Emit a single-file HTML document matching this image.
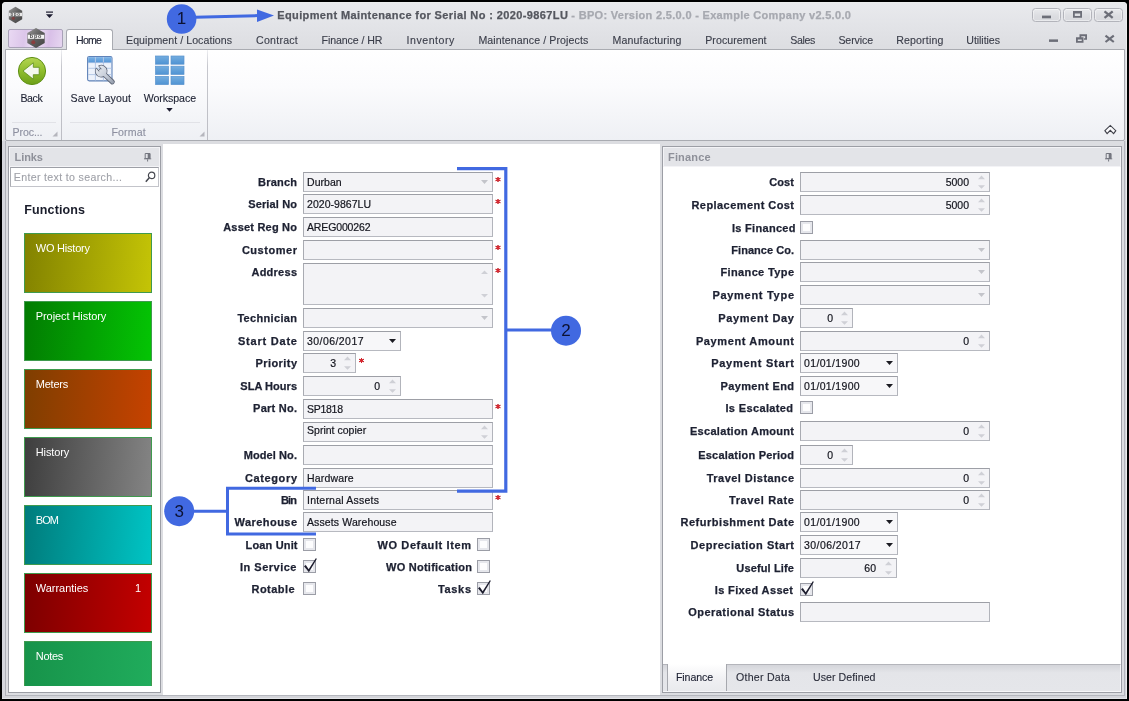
<!DOCTYPE html>
<html><head><meta charset="utf-8"><title>Equipment Maintenance</title>
<style>
*{box-sizing:border-box;margin:0;padding:0}
html,body{width:1129px;height:701px;overflow:hidden;background:#000}
body{font-family:"Liberation Sans",sans-serif;font-size:10.5px;color:#1e2233;position:relative}
div,span,svg{position:absolute}
.t{white-space:nowrap;line-height:12px}
.lbl{font-weight:bold;font-size:11px;-webkit-text-stroke:.25px #1d2132;text-align:right;white-space:nowrap;line-height:12px;color:#1d2132}
.inp{background:#f3f3f6;border:1px solid #abadb3;border-color:#9d9fa6 #b2b4bb #b7b9c0 #a9abb2}
.v{left:3px;top:3px;white-space:nowrap;line-height:12px;color:#14151e;-webkit-text-stroke:.2px #14151e}
.r{top:3px;white-space:nowrap;line-height:12px;color:#14151e;text-align:right;-webkit-text-stroke:.2px #14151e}
.cb{width:13px;height:13px;border:1px solid #9b9da6;background:#fdfdfe;box-shadow:inset 0 0 0 2px #e6e7ec}
.ast{color:#e2202a;font-family:'DejaVu Sans',sans-serif;font-weight:bold;font-size:10.5px;line-height:10px;text-shadow:0 0 .6px #7a1010}
.tab{white-space:nowrap;line-height:12px;color:#3b3e4a;font-size:10.6px;letter-spacing:.12px;-webkit-text-stroke:.12px currentColor}
.tile{width:128px;height:60px;border:1px solid #3f9a4e;color:#fff}
.tile span{left:10px;top:8px;font-size:11.3px;line-height:13px;white-space:nowrap}
.num{color:#0c1233;font-size:17px;line-height:18px;text-align:center;width:30px}
</style></head><body>
<div id="root" style="left:0;top:0;width:1129px;height:701px;will-change:transform">
<div style="left:2px;top:2px;width:1125px;height:697px;background:#dcdde1;border-radius:4px 4px 0 0"></div>
<div style="left:2px;top:2px;width:1125px;height:697px;border:1px solid #eceded;border-radius:4px 4px 0 0;border-bottom-color:#e3e4e8"></div>
<div style="left:1124px;top:141px;width:1px;height:555px;background:#b4b6bd"></div>
<div style="left:5px;top:695px;width:1120px;height:1px;background:#b4b6bd"></div>
<div style="left:5px;top:141px;width:1px;height:555px;background:#b0b2b9"></div>
<div style="left:2px;top:141px;width:3px;height:557px;background:#d6d7dd"></div>
<div style="left:3px;top:696px;width:1123px;height:2px;background:#d3d4d9"></div>
<div style="left:1125px;top:141px;width:1px;height:556px;background:#d3d4d9"></div>
<div style="left:3px;top:3px;width:1123px;height:47px;background:linear-gradient(#e9eaed,#e3e4e8 45%,#dcdde1);border-radius:4px 4px 0 0"></div>
<svg style="left:8px;top:6px" width="15" height="18" viewBox="0 0 15 18"><defs><linearGradient id="hg" x1="0" y1="0" x2="1" y2="1"><stop offset="0" stop-color="#9a9a9a"/><stop offset=".5" stop-color="#5e5e5e"/><stop offset="1" stop-color="#444"/></linearGradient></defs><path d="M7.500 0.800L14.200 4.700V13.300L7.500 17.200L0.800 13.300V4.700z" fill="url(#hg)"/><rect x="1" y="6.800" width="13" height="3.400" fill="#e9e9e9"/><text x="7.500" y="9.800" font-size="4.500" font-weight="bold" text-anchor="middle" fill="#555" font-family="Liberation Sans,sans-serif" letter-spacing="0.600">bpo</text><circle cx="5.300" cy="12.300" r="1.600" fill="#8c3030" opacity=".65"/></svg>
<svg style="left:45px;top:11px" width="9" height="8" viewBox="0 0 9 8"><rect x="1" y="0.5" width="7" height="1.2" fill="#1c1c30"/><path d="M1 3.2h7L4.5 7z" fill="#1c1c30"/></svg>
<span class="t" style="left:277.20px;top:9px;font-weight:bold;font-size:11px;letter-spacing:0.39px;color:#55575f;-webkit-text-stroke:.25px #55575f">Equipment Maintenance for Serial No : 2020-9867LU</span>
<span class="t" style="left:571.30px;top:9px;font-weight:bold;font-size:11px;letter-spacing:0.31px;color:#a7a9b0;-webkit-text-stroke:.25px #a7a9b0">- BPO: Version 2.5.0.0 - Example Company v2.5.0.0</span>
<div style="left:1032px;top:7.5px;width:29px;height:14.5px;border:1px solid #b3b4bb;border-radius:3.5px;background:linear-gradient(#e9eaed,#dcdde1 55%,#d8d9de);box-shadow:inset 0 0 0 1px rgba(255,255,255,.45)"></div>
<div style="left:1063px;top:7.5px;width:29px;height:14.5px;border:1px solid #b3b4bb;border-radius:3.5px;background:linear-gradient(#e9eaed,#dcdde1 55%,#d8d9de);box-shadow:inset 0 0 0 1px rgba(255,255,255,.45)"></div>
<div style="left:1094px;top:7.5px;width:29px;height:14.5px;border:1px solid #b3b4bb;border-radius:3.5px;background:linear-gradient(#e9eaed,#dcdde1 55%,#d8d9de);box-shadow:inset 0 0 0 1px rgba(255,255,255,.45)"></div>
<svg style="left:1032px;top:7px" width="92" height="16" viewBox="0 0 92 16"><rect x="10" y="8.600" width="9" height="2.700" fill="#6c6e78"/><path d="M41 4h9v6.800h-9z M42.800 6.400v2.600h5.400v-2.600z" fill="#6c6e78" fill-rule="evenodd"/><path d="M72.500 4.300l8.200 6.500M80.700 4.300l-8.200 6.500" stroke="#6c6e78" stroke-width="2.300" fill="none"/></svg>
<div style="left:8px;top:29px;width:55px;height:19px;border:1px solid #a9a2b8;border-radius:2px;background:linear-gradient(100deg,#e9d9f3,#dcc6ea 30%,#efe6f6 50%,#d9c0e8 75%,#e6d6f0)"></div>
<svg style="left:26px;top:27px" width="20" height="22" viewBox="0 0 20 22"><path d="M10 1L18.700 6V16L10 21L1.300 16V6z" fill="url(#hg)"/><rect x="1.800" y="7.800" width="16.400" height="4" fill="#f4f4f4"/><text x="10" y="11.400" font-size="5.500" font-weight="bold" text-anchor="middle" fill="#444" font-family="Liberation Sans,sans-serif" letter-spacing="0.800">bpo</text><circle cx="7.300" cy="15.300" r="2" fill="#9c3030" opacity=".7"/></svg>
<div style="left:5px;top:49px;width:1120px;height:92px;background:linear-gradient(#ffffff,#fbfbfd 40%,#eef0f4);border:1px solid #a9abb1;border-radius:0 0 2px 2px"></div>
<div style="left:66px;top:29px;width:47px;height:21px;background:#fff;border:1px solid #a9abb1;border-bottom:none;border-radius:3px 3px 0 0"></div>
<span class="tab" style="left:76.00px;top:34px;letter-spacing:-0.75px;color:#1e2233">Home</span>
<span class="tab" style="left:126.00px;top:34px;letter-spacing:0.06px;">Equipment / Locations</span>
<span class="tab" style="left:256.00px;top:34px;letter-spacing:0.25px;">Contract</span>
<span class="tab" style="left:321.50px;top:34px;letter-spacing:-0.08px;">Finance / HR</span>
<span class="tab" style="left:406.50px;top:34px;letter-spacing:0.53px;">Inventory</span>
<span class="tab" style="left:478.40px;top:34px;letter-spacing:0.10px;">Maintenance / Projects</span>
<span class="tab" style="left:612.40px;top:34px;letter-spacing:0.16px;">Manufacturing</span>
<span class="tab" style="left:705.20px;top:34px;letter-spacing:0.07px;">Procurement</span>
<span class="tab" style="left:790.30px;top:34px;letter-spacing:-0.35px;">Sales</span>
<span class="tab" style="left:838.40px;top:34px;letter-spacing:-0.09px;">Service</span>
<span class="tab" style="left:896.20px;top:34px;letter-spacing:0.15px;">Reporting</span>
<span class="tab" style="left:966.30px;top:34px;letter-spacing:-0.06px;">Utilities</span>
<svg style="left:1045px;top:32px" width="75" height="14" viewBox="0 0 75 14"><rect x="4" y="7.400" width="9" height="2.500" fill="#6c6e78"/><path d="M34.500 2.300h7.500v5.500h-3v-1.600h1.200v-1.900h-3.900v1h-1.800z M31 5.300h7.500v5.500H31z M32.800 7.600v1.500h3.900v-1.500z" fill="#6c6e78" fill-rule="evenodd"/><path d="M60.500 3.600l8.300 6.400M68.800 3.600l-8.300 6.400" stroke="#6c6e78" stroke-width="2.200" fill="none"/></svg>
<div style="left:61px;top:50px;width:1px;height:90px;background:linear-gradient(#eeeff2,#c6c7cd 18%,#bcbdc4)"></div>
<div style="left:207px;top:50px;width:1px;height:90px;background:linear-gradient(#eeeff2,#c6c7cd 18%,#bcbdc4)"></div>
<div style="left:12px;top:122px;width:44px;height:1px;background:#e1e2e7"></div>
<div style="left:70px;top:122px;width:130px;height:1px;background:#e1e2e7"></div>
<svg style="left:17px;top:56px" width="30" height="30" viewBox="0 0 30 30"><defs><linearGradient id="gg" x1="0" y1="0" x2="0" y2="1"><stop offset="0" stop-color="#b4d552"/><stop offset=".5" stop-color="#8fbd2c"/><stop offset="1" stop-color="#6c9f18"/></linearGradient></defs><circle cx="15" cy="15" r="13.600" fill="url(#gg)" stroke="#5f9016" stroke-width="1"/><path d="M6 15L16.300 6.800V11.300h5.900v7.400H16.300v4.500z" fill="#f4f8ee" stroke="#5b8a17" stroke-width=".8"/></svg>
<svg style="left:86px;top:55px" width="31" height="31" viewBox="0 0 31 31"><defs><linearGradient id="tg" x1="0" y1="0" x2="0" y2="1"><stop offset="0" stop-color="#7db3e6"/><stop offset="1" stop-color="#5596d6"/></linearGradient><linearGradient id="wg" gradientUnits="userSpaceOnUse" x1="9" y1="10" x2="28" y2="29"><stop offset="0" stop-color="#eef1f6"/><stop offset=".6" stop-color="#c3cad6"/><stop offset="1" stop-color="#8f98a8"/></linearGradient></defs><rect x="1.600" y="1.500" width="24.400" height="24.400" rx="1.600" fill="#edf2fb" stroke="#5f82b8" stroke-width="1.100"/><path d="M2.200 2.100h23.200v5.400H2.200z" fill="url(#tg)"/><path d="M9.400 2v23.400M17.400 2v23.400M2.200 13.300h23.200M2.200 19.600h23.200" stroke="#b4c8e6" stroke-width="1"/><path d="M2.200 7.600h23.200" stroke="#8fb2de" stroke-width=".8"/><path d="M18 19L26.300 26.900" stroke="#5d6475" stroke-width="5" stroke-linecap="round"/><path d="M13.09 11.01L16.34 14.63A1.9 1.9 0 0 0 13.52 17.17L10.26 13.56A5.6 5.6 0 1 0 13.09 11.01z" fill="#5d6475" stroke="#5d6475" stroke-width="1.400" stroke-linejoin="round"/><path d="M18 19L26.300 26.900" stroke="url(#wg)" stroke-width="3.300" stroke-linecap="round"/><path d="M13.09 11.01L16.34 14.63A1.9 1.9 0 0 0 13.52 17.17L10.26 13.56A5.6 5.6 0 1 0 13.09 11.01z" fill="url(#wg)"/></svg>
<svg style="left:155px;top:55px" width="30" height="31" viewBox="0 0 30 31"><defs><linearGradient id="bg2" x1="0" y1="0" x2="0" y2="1"><stop offset="0" stop-color="#74addf"/><stop offset="1" stop-color="#4f93d3"/></linearGradient></defs><rect x="0.5" y="1.0" width="13" height="8.200" fill="url(#bg2)" stroke="#5a93cd" stroke-width=".7"/><rect x="16.0" y="1.0" width="13" height="8.200" fill="url(#bg2)" stroke="#5a93cd" stroke-width=".7"/><rect x="0.5" y="11.2" width="13" height="8.200" fill="url(#bg2)" stroke="#5a93cd" stroke-width=".7"/><rect x="16.0" y="11.2" width="13" height="8.200" fill="url(#bg2)" stroke="#5a93cd" stroke-width=".7"/><rect x="0.5" y="21.4" width="13" height="8.200" fill="url(#bg2)" stroke="#5a93cd" stroke-width=".7"/><rect x="16.0" y="21.4" width="13" height="8.200" fill="url(#bg2)" stroke="#5a93cd" stroke-width=".7"/></svg>
<span class="tab" style="left:20.50px;top:92px;letter-spacing:-0.45px;color:#1e2233">Back</span>
<span class="tab" style="left:70.60px;top:92px;letter-spacing:0.15px;color:#1e2233">Save Layout</span>
<span class="tab" style="left:143.80px;top:92px;letter-spacing:-0.07px;color:#1e2233">Workspace</span>
<svg style="left:166px;top:108px" width="7" height="4" viewBox="0 0 7 4"><path d="M0.300 0h6.400L3.500 3.800z" fill="#1c1c30"/></svg>
<span class="tab" style="left:12.50px;top:126px;letter-spacing:-0.10px;color:#8d90a0">Proc...</span>
<span class="tab" style="left:111.50px;top:126px;letter-spacing:0.11px;color:#8d90a0">Format</span>
<svg style="left:52px;top:131px" width="6" height="6" viewBox="0 0 6 6"><path d="M5.500 0.500v5h-5z" fill="#b5b6bd"/></svg>
<svg style="left:199px;top:131px" width="6" height="6" viewBox="0 0 6 6"><path d="M5.500 0.500v5h-5z" fill="#b5b6bd"/></svg>
<svg style="left:1104px;top:124px" width="13" height="12" viewBox="0 0 13 12"><path d="M0.900 6.700L6.300 1.400L11.800 6.700L9.600 9.700L6.300 6.300L3.100 9.700z" fill="#fafafc" stroke="#3f414a" stroke-width="1.100" stroke-linejoin="miter"/></svg>
<div style="left:163px;top:144px;width:497px;height:551px;background:#fff"></div>
<div style="left:8px;top:146px;width:153px;height:547px;background:#fff;border:1px solid #9c9ea5"></div>
<div style="left:9px;top:147px;width:151px;height:20px;background:#e3e4e8;border:1px solid #f3f3f6"></div>
<span class="t" style="left:14.50px;top:151px;font-weight:bold;font-size:11px;letter-spacing:-0.06px;color:#8e9099">Links</span>
<svg style="left:144px;top:152.500px" width="8" height="9" viewBox="0 0 8 9"><path d="M1.200 0.500h4.800v5H1.200z" fill="none" stroke="#74767f" stroke-width="1"/><rect x="3.700" y="0.500" width="2.500" height="5" fill="#74767f"/><rect x="0" y="5.300" width="7.200" height="1" fill="#74767f"/><rect x="3.100" y="6.300" width="1" height="2.200" fill="#74767f"/></svg>
<div style="left:10px;top:167px;width:149px;height:20px;background:#fff;border:1px solid #abadb3;border-color:#9d9fa6 #c3c4ca #c3c4ca #abadb3"></div>
<span class="tab" style="left:13.75px;top:171px;letter-spacing:0.34px;color:#a0a2a9">Enter text to search...</span>
<svg style="left:144.700px;top:171px" width="11" height="12" viewBox="0 0 11 12"><circle cx="6.600" cy="4.400" r="3.200" fill="none" stroke="#45474f" stroke-width="1.200"/><path d="M4.300 6.800L0.800 10.800" stroke="#45474f" stroke-width="1.500"/></svg>
<span class="t" style="left:24.25px;top:203px;font-weight:bold;font-size:12.5px;letter-spacing:0.13px;color:#1a1d2b;line-height:14px">Functions</span>
<div class="tile" style="left:24px;top:233px;height:60px;background:linear-gradient(94deg,#828200,#c4c406)"></div>
<span class="t" style="left:35.75px;top:242px;font-weight:normal;font-size:11px;letter-spacing:-0.22px;color:#fff;line-height:13px">WO History</span>
<div class="tile" style="left:24px;top:301px;height:60px;background:linear-gradient(94deg,#027c02,#04c404)"></div>
<span class="t" style="left:35.75px;top:310px;font-weight:normal;font-size:11px;letter-spacing:-0.07px;color:#fff;line-height:13px">Project History</span>
<div class="tile" style="left:24px;top:369px;height:60px;background:linear-gradient(94deg,#7e3e00,#c64200)"></div>
<span class="t" style="left:35.75px;top:378px;font-weight:normal;font-size:11px;letter-spacing:-0.22px;color:#fff;line-height:13px">Meters</span>
<div class="tile" style="left:24px;top:437px;height:60px;background:linear-gradient(94deg,#3e3e3e,#848484)"></div>
<span class="t" style="left:35.75px;top:446px;font-weight:normal;font-size:11px;letter-spacing:-0.12px;color:#fff;line-height:13px">History</span>
<div class="tile" style="left:24px;top:505px;height:60px;background:linear-gradient(94deg,#007c7c,#00c4c4)"></div>
<span class="t" style="left:35.75px;top:514px;font-weight:normal;font-size:11px;letter-spacing:-0.90px;color:#fff;line-height:13px">BOM</span>
<div class="tile" style="left:24px;top:573px;height:60px;background:linear-gradient(94deg,#7c0000,#c40000)"></div>
<span class="t" style="left:35.75px;top:582px;font-weight:normal;font-size:11px;letter-spacing:-0.03px;color:#fff;line-height:13px">Warranties</span>
<span class="t" style="left:135px;top:582px;color:#fff;font-size:11px;line-height:13px">1</span>
<div class="tile" style="left:24px;top:641px;height:45px;border-bottom:none;background:linear-gradient(94deg,#17934a,#20ac5c)"></div>
<span class="t" style="left:35.75px;top:650px;font-weight:normal;font-size:11px;letter-spacing:-0.31px;color:#fff;line-height:13px">Notes</span>
<span class="lbl" style="right:831.80px;top:176px;letter-spacing:0.20px;">Branch</span>
<div class="inp" style="left:303px;top:172px;width:190px;height:20px;"><span class="v" style="letter-spacing:0.05px">Durban</span><svg style="right:4px;top:7px" width="7" height="4" viewBox="0 0 7 4"><path d="M0 0h7L3.500 4z" fill="#c3c4ca"/></svg></div>
<span class="ast" style="left:495.3px;top:176px;">*</span>
<span class="lbl" style="right:831.86px;top:198px;letter-spacing:0.14px;">Serial No</span>
<div class="inp" style="left:303px;top:194px;width:190px;height:20px;"><span class="v" style="letter-spacing:0.04px">2020-9867LU</span></div>
<span class="ast" style="left:495.3px;top:198px;">*</span>
<span class="lbl" style="right:831.79px;top:221px;letter-spacing:0.21px;">Asset Reg No</span>
<div class="inp" style="left:303px;top:217px;width:190px;height:20px;"><span class="v" style="letter-spacing:-0.14px">AREG000262</span></div>
<span class="lbl" style="right:831.46px;top:244px;letter-spacing:0.54px;">Customer</span>
<div class="inp" style="left:303px;top:240px;width:190px;height:20px;"></div>
<span class="ast" style="left:495.3px;top:244px;">*</span>
<span class="lbl" style="right:831.74px;top:266px;letter-spacing:0.26px;">Address</span>
<div class="inp" style="left:303px;top:263px;width:190px;height:42px;"><svg style="right:4px;top:6px" width="7" height="30" viewBox="0 0 7 30"><path d="M0 4h7L3.500 0.500z M0 24h7L3.500 27.5z" fill="#cfd0d6"/></svg></div>
<span class="ast" style="left:495.3px;top:267px;">*</span>
<span class="lbl" style="right:831.67px;top:312px;letter-spacing:0.33px;">Technician</span>
<div class="inp" style="left:303px;top:308px;width:190px;height:20px;"><svg style="right:4px;top:7px" width="7" height="4" viewBox="0 0 7 4"><path d="M0 0h7L3.500 4z" fill="#c3c4ca"/></svg></div>
<span class="lbl" style="right:831.21px;top:335px;letter-spacing:0.79px;">Start Date</span>
<div class="inp" style="left:303px;top:331px;width:98px;height:20px;background:#f7f7f9;"><span class="v" style="letter-spacing:0.44px">30/06/2017</span><svg style="right:4px;top:7px" width="7" height="4" viewBox="0 0 7 4"><path d="M0 0h7L3.500 4z" fill="#1b1b22"/></svg></div>
<span class="lbl" style="right:831.56px;top:357px;letter-spacing:0.44px;">Priority</span>
<div class="inp" style="left:303px;top:353px;width:53px;height:20px;"><span class="r" style="right:19px">3</span><svg style="right:4px;top:2px" width="7" height="15" viewBox="0 0 7 15"><path d="M0 4.200h7L3.500 0.600z M0 10.200h7L3.500 13.800z" fill="#cfd0d6"/></svg></div>
<span class="ast" style="left:358.8px;top:357px;">*</span>
<span class="lbl" style="right:831.97px;top:380px;letter-spacing:0.03px;">SLA Hours</span>
<div class="inp" style="left:303px;top:376px;width:98px;height:20px;"><span class="r" style="right:20px">0</span><svg style="right:4px;top:2px" width="7" height="15" viewBox="0 0 7 15"><path d="M0 4.200h7L3.500 0.600z M0 10.200h7L3.500 13.800z" fill="#cfd0d6"/></svg></div>
<span class="lbl" style="right:831.75px;top:402px;letter-spacing:0.25px;">Part No.</span>
<div class="inp" style="left:303px;top:399px;width:190px;height:20px;"><span class="v" style="letter-spacing:-0.27px">SP1818</span></div>
<span class="ast" style="left:495.3px;top:403px;">*</span>
<div class="inp" style="left:303px;top:422px;width:190px;height:20px;"><span class="v" style="top:1px;letter-spacing:0.02px">Sprint copier</span><svg style="right:4px;top:2px" width="7" height="15" viewBox="0 0 7 15"><path d="M0 4.200h7L3.500 0.600z M0 10.200h7L3.500 13.800z" fill="#cfd0d6"/></svg></div>
<span class="lbl" style="right:831.91px;top:449px;letter-spacing:0.09px;">Model No.</span>
<div class="inp" style="left:303px;top:445px;width:190px;height:20px;"></div>
<span class="lbl" style="right:831.37px;top:472px;letter-spacing:0.63px;">Category</span>
<div class="inp" style="left:303px;top:468px;width:190px;height:20px;"><span class="v" style="letter-spacing:0.17px">Hardware</span></div>
<span class="lbl" style="right:832.90px;top:494px;letter-spacing:-0.90px;">Bin</span>
<div class="inp" style="left:303px;top:490px;width:190px;height:20px;"><span class="v" style="letter-spacing:0.22px">Internal Assets</span></div>
<span class="ast" style="left:495.3px;top:494px;">*</span>
<span class="lbl" style="right:831.55px;top:516px;letter-spacing:0.45px;">Warehouse</span>
<div class="inp" style="left:303px;top:512px;width:190px;height:20px;"><span class="v" style="letter-spacing:0.12px">Assets Warehouse</span></div>
<span class="lbl" style="right:831.34px;top:539px;letter-spacing:0.16px;">Loan Unit</span>
<div class="cb" style="left:303px;top:538px"></div>
<span class="lbl" style="right:832.00px;top:561px;letter-spacing:0.50px;">In Service</span>
<div class="cb" style="left:303px;top:560px"><svg style="left:-1px;top:-4px" width="16" height="17" viewBox="0 0 16 17"><path d="M1 9.300L2.800 8L5.700 12.200L12.800 1.200L13.900 1.800L5.900 15.300z" fill="#1d1d2e"/></svg></div>
<span class="lbl" style="right:834.06px;top:583px;letter-spacing:0.44px;">Rotable</span>
<div class="cb" style="left:303px;top:582px"></div>
<span class="lbl" style="right:657.39px;top:539px;letter-spacing:0.61px;">WO Default Item</span>
<div class="cb" style="left:477px;top:538px"></div>
<span class="lbl" style="right:656.75px;top:561px;letter-spacing:0.25px;">WO Notification</span>
<div class="cb" style="left:477px;top:560px"></div>
<span class="lbl" style="right:657.34px;top:583px;letter-spacing:0.66px;">Tasks</span>
<div class="cb" style="left:477px;top:582px"><svg style="left:-1px;top:-4px" width="16" height="17" viewBox="0 0 16 17"><path d="M1 9.300L2.800 8L5.700 12.200L12.800 1.200L13.900 1.800L5.900 15.300z" fill="#1d1d2e"/></svg></div>
<div style="left:662px;top:146px;width:460px;height:547px;background:#fff;border:1px solid #9c9ea5"></div>
<div style="left:663px;top:147px;width:458px;height:20px;background:#e3e4e8;border:1px solid #f3f3f6"></div>
<span class="t" style="left:668.00px;top:151px;font-weight:bold;font-size:11px;letter-spacing:0.16px;color:#8e9099">Finance</span>
<svg style="left:1105px;top:152.500px" width="8" height="9" viewBox="0 0 8 9"><path d="M1.200 0.500h4.800v5H1.200z" fill="none" stroke="#74767f" stroke-width="1"/><rect x="3.700" y="0.500" width="2.500" height="5" fill="#74767f"/><rect x="0" y="5.300" width="7.200" height="1" fill="#74767f"/><rect x="3.100" y="6.300" width="1" height="2.200" fill="#74767f"/></svg>
<span class="lbl" style="right:334.91px;top:176px;letter-spacing:0.09px;">Cost</span>
<div class="inp" style="left:800px;top:172px;width:190px;height:20px;"><span class="r" style="right:20px">5000</span><svg style="right:4px;top:2px" width="7" height="15" viewBox="0 0 7 15"><path d="M0 4.200h7L3.500 0.600z M0 10.200h7L3.500 13.800z" fill="#cfd0d6"/></svg></div>
<span class="lbl" style="right:334.56px;top:199px;letter-spacing:0.44px;">Replacement Cost</span>
<div class="inp" style="left:800px;top:195px;width:190px;height:20px;"><span class="r" style="right:20px">5000</span><svg style="right:4px;top:2px" width="7" height="15" viewBox="0 0 7 15"><path d="M0 4.200h7L3.500 0.600z M0 10.200h7L3.500 13.800z" fill="#cfd0d6"/></svg></div>
<span class="lbl" style="right:333.19px;top:222px;letter-spacing:0.31px;">Is Financed</span>
<div class="cb" style="left:800px;top:221px"></div>
<span class="lbl" style="right:334.97px;top:244px;letter-spacing:0.03px;">Finance Co.</span>
<div class="inp" style="left:800px;top:240px;width:190px;height:20px;"><svg style="right:4px;top:7px" width="7" height="4" viewBox="0 0 7 4"><path d="M0 0h7L3.500 4z" fill="#c3c4ca"/></svg></div>
<span class="lbl" style="right:334.63px;top:266px;letter-spacing:0.37px;">Finance Type</span>
<div class="inp" style="left:800px;top:262px;width:190px;height:20px;"><svg style="right:4px;top:7px" width="7" height="4" viewBox="0 0 7 4"><path d="M0 0h7L3.500 4z" fill="#c3c4ca"/></svg></div>
<span class="lbl" style="right:334.29px;top:289px;letter-spacing:0.71px;">Payment Type</span>
<div class="inp" style="left:800px;top:285px;width:190px;height:20px;"><svg style="right:4px;top:7px" width="7" height="4" viewBox="0 0 7 4"><path d="M0 0h7L3.500 4z" fill="#c3c4ca"/></svg></div>
<span class="lbl" style="right:334.33px;top:312px;letter-spacing:0.67px;">Payment Day</span>
<div class="inp" style="left:800px;top:308px;width:53px;height:20px;"><span class="r" style="right:19px">0</span><svg style="right:4px;top:2px" width="7" height="15" viewBox="0 0 7 15"><path d="M0 4.200h7L3.500 0.600z M0 10.200h7L3.500 13.800z" fill="#cfd0d6"/></svg></div>
<span class="lbl" style="right:334.38px;top:335px;letter-spacing:0.62px;">Payment Amount</span>
<div class="inp" style="left:800px;top:331px;width:190px;height:20px;"><span class="r" style="right:20px">0</span><svg style="right:4px;top:2px" width="7" height="15" viewBox="0 0 7 15"><path d="M0 4.200h7L3.500 0.600z M0 10.200h7L3.500 13.800z" fill="#cfd0d6"/></svg></div>
<span class="lbl" style="right:334.26px;top:357px;letter-spacing:0.74px;">Payment Start</span>
<div class="inp" style="left:800px;top:353px;width:98px;height:20px;background:#f7f7f9;"><span class="v" style="letter-spacing:0.35px">01/01/1900</span><svg style="right:4px;top:7px" width="7" height="4" viewBox="0 0 7 4"><path d="M0 0h7L3.500 4z" fill="#1b1b22"/></svg></div>
<span class="lbl" style="right:334.61px;top:380px;letter-spacing:0.39px;">Payment End</span>
<div class="inp" style="left:800px;top:376px;width:98px;height:20px;background:#f7f7f9;"><span class="v" style="letter-spacing:0.35px">01/01/1900</span><svg style="right:4px;top:7px" width="7" height="4" viewBox="0 0 7 4"><path d="M0 0h7L3.500 4z" fill="#1b1b22"/></svg></div>
<span class="lbl" style="right:335.64px;top:402px;letter-spacing:0.36px;">Is Escalated</span>
<div class="cb" style="left:800px;top:401px"></div>
<span class="lbl" style="right:334.70px;top:425px;letter-spacing:0.30px;">Escalation Amount</span>
<div class="inp" style="left:800px;top:421px;width:190px;height:20px;"><span class="r" style="right:20px">0</span><svg style="right:4px;top:2px" width="7" height="15" viewBox="0 0 7 15"><path d="M0 4.200h7L3.500 0.600z M0 10.200h7L3.500 13.800z" fill="#cfd0d6"/></svg></div>
<span class="lbl" style="right:334.78px;top:449px;letter-spacing:0.22px;">Escalation Period</span>
<div class="inp" style="left:800px;top:445px;width:53px;height:20px;"><span class="r" style="right:19px">0</span><svg style="right:4px;top:2px" width="7" height="15" viewBox="0 0 7 15"><path d="M0 4.200h7L3.500 0.600z M0 10.200h7L3.500 13.800z" fill="#cfd0d6"/></svg></div>
<span class="lbl" style="right:334.53px;top:472px;letter-spacing:0.47px;">Travel Distance</span>
<div class="inp" style="left:800px;top:468px;width:190px;height:20px;"><span class="r" style="right:20px">0</span><svg style="right:4px;top:2px" width="7" height="15" viewBox="0 0 7 15"><path d="M0 4.200h7L3.500 0.600z M0 10.200h7L3.500 13.800z" fill="#cfd0d6"/></svg></div>
<span class="lbl" style="right:334.36px;top:494px;letter-spacing:0.64px;">Travel Rate</span>
<div class="inp" style="left:800px;top:490px;width:190px;height:20px;"><span class="r" style="right:20px">0</span><svg style="right:4px;top:2px" width="7" height="15" viewBox="0 0 7 15"><path d="M0 4.200h7L3.500 0.600z M0 10.200h7L3.500 13.800z" fill="#cfd0d6"/></svg></div>
<span class="lbl" style="right:334.47px;top:516px;letter-spacing:0.53px;">Refurbishment Date</span>
<div class="inp" style="left:800px;top:512px;width:98px;height:20px;background:#f7f7f9;"><span class="v" style="letter-spacing:0.35px">01/01/1900</span><svg style="right:4px;top:7px" width="7" height="4" viewBox="0 0 7 4"><path d="M0 0h7L3.500 4z" fill="#1b1b22"/></svg></div>
<span class="lbl" style="right:334.49px;top:539px;letter-spacing:0.51px;">Depreciation Start</span>
<div class="inp" style="left:800px;top:535px;width:98px;height:20px;background:#f7f7f9;"><span class="v" style="letter-spacing:0.44px">30/06/2017</span><svg style="right:4px;top:7px" width="7" height="4" viewBox="0 0 7 4"><path d="M0 0h7L3.500 4z" fill="#1b1b22"/></svg></div>
<span class="lbl" style="right:334.86px;top:562px;letter-spacing:0.14px;">Useful Life</span>
<div class="inp" style="left:800px;top:558px;width:97px;height:20px;"><span class="r" style="right:20px">60</span><svg style="right:4px;top:2px" width="7" height="15" viewBox="0 0 7 15"><path d="M0 4.200h7L3.500 0.600z M0 10.200h7L3.500 13.800z" fill="#cfd0d6"/></svg></div>
<span class="lbl" style="right:335.64px;top:584px;letter-spacing:0.36px;">Is Fixed Asset</span>
<div class="cb" style="left:800px;top:583px"><svg style="left:-1px;top:-4px" width="16" height="17" viewBox="0 0 16 17"><path d="M1 9.300L2.800 8L5.700 12.200L12.800 1.200L13.900 1.800L5.900 15.300z" fill="#1d1d2e"/></svg></div>
<span class="lbl" style="right:334.53px;top:606px;letter-spacing:0.47px;">Operational Status</span>
<div class="inp" style="left:800px;top:602px;width:190px;height:20px;"></div>
<div style="left:663px;top:664px;width:458px;height:28px;background:linear-gradient(#d4d5da,#e4e5e9 30%,#e5e6ea);border-top:1px solid #b4b5bb;border-right:1px solid #f6f6f8;border-bottom:1px solid #f6f6f8"></div>
<div style="left:667px;top:664px;width:60px;height:27px;background:linear-gradient(#ffffff,#efeff2 60%,#e9eaed);border:1px solid #a6a8ae;border-top:none;border-bottom:none"></div>
<span class="tab" style="left:676.00px;top:671px;letter-spacing:-0.11px;color:#1e2233">Finance</span>
<span class="tab" style="left:736.00px;top:671px;letter-spacing:0.24px;color:#2a2d3a">Other Data</span>
<span class="tab" style="left:813.00px;top:671px;letter-spacing:0.06px;color:#2a2d3a">User Defined</span>
<svg style="left:0;top:0" width="1129" height="701" viewBox="0 0 1129 701"><path d="M457 168.700h48.800v322.500h-48.800" fill="none" stroke="#4169e1" stroke-width="3.200"/><path d="M506 330h48" fill="none" stroke="#4169e1" stroke-width="3"/><path d="M316 488.300h-88.500v45.800h88.500" fill="none" stroke="#4169e1" stroke-width="3"/><path d="M192 511.300h36" fill="none" stroke="#4169e1" stroke-width="3"/><path d="M195 17.200L258 15.600" fill="none" stroke="#4169e1" stroke-width="3"/><path d="M257 9.500L274 15.500L257 22z" fill="#4169e1"/><circle cx="566" cy="330.700" r="15" fill="#4169e1"/><circle cx="179.200" cy="511.200" r="15" fill="#4169e1"/><circle cx="181.600" cy="19" r="14.800" fill="#4169e1"/></svg>
<span class="num" style="left:551px;top:322px;">2</span>
<span class="num" style="left:164.2px;top:502.5px;">3</span>
<span class="num" style="left:166.5px;top:10px;">1</span>
</div>
</body></html>
